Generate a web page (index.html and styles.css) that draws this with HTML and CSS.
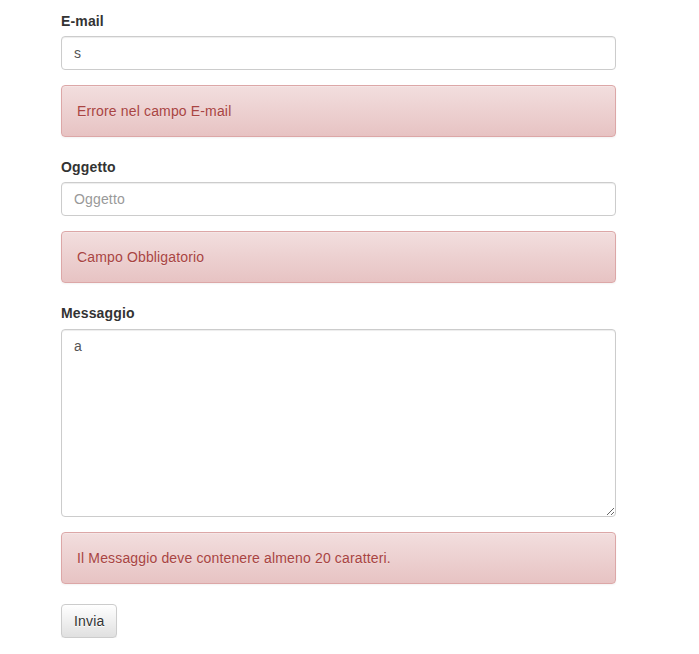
FILE: index.html
```html
<!DOCTYPE html>
<html lang="it">
<head>
<meta charset="utf-8">
<title>Contatti</title>
<link rel="stylesheet" href="styles.css">
</head>
<body>
<form class="form">
  <div class="form-group">
    <label class="label" for="email">E-mail</label>
    <input class="control" id="email" type="text" value="s">
  </div>
  <div class="alert">Errore nel campo E-mail</div>
  <div class="form-group">
    <label class="label" for="oggetto">Oggetto</label>
    <input class="control" id="oggetto" type="text" placeholder="Oggetto">
  </div>
  <div class="alert">Campo Obbligatorio</div>
  <div class="form-group">
    <label class="label" for="msg">Messaggio</label>
    <textarea class="control textarea" id="msg">a</textarea>
  </div>
  <div class="alert">Il Messaggio deve contenere almeno 20 caratteri.</div>
  <button class="btn" type="button">Invia</button>
</form>
</body>
</html>
```
FILE: styles.css
```css
* { box-sizing: border-box; }
html, body { margin: 0; padding: 0; background: #fff; }
body {
  font-family: "Liberation Sans", Arial, sans-serif;
  font-size: 14px;
  line-height: 20px;
  letter-spacing: 0.15px;
  color: #333;
}
.form {
  width: 555px;
  margin: 11px 0 0 61px;
}
.form-group { margin-bottom: 15px; }
.label {
  display: inline-block;
  font-weight: bold;
  margin-bottom: 5px;
}
.control {
  display: block;
  width: 100%;
  height: 34px;
  padding: 6px 12px;
  font-family: inherit;
  font-size: 14px;
  line-height: 20px;
  letter-spacing: inherit;
  color: #555;
  background: #fff;
  border: 1px solid #ccc;
  border-radius: 4px;
  box-shadow: inset 0 1px 1px rgba(0,0,0,.075);
  margin: 0;
}
.control::placeholder { color: #999; }
.textarea {
  height: 188px;
  margin-top: 1px;
  resize: vertical;
}
.alert {
  padding: 15px;
  margin-bottom: 20px;
  border: 1px solid #dca7a7;
  border-radius: 4px;
  color: #a94442;
  background: linear-gradient(to bottom, #f2dede 0, #e7c3c3 100%);
  box-shadow: inset 0 1px 0 rgba(255,255,255,.25), 0 1px 2px rgba(0,0,0,.05);
  text-shadow: 0 1px 0 rgba(255,255,255,.2);
}
.btn {
  display: inline-block;
  height: 34px;
  padding: 6px 12px;
  font-family: inherit;
  font-size: 14px;
  line-height: 20px;
  letter-spacing: inherit;
  color: #333;
  border: 1px solid #ccc;
  border-radius: 4px;
  background: linear-gradient(to bottom, #fff 0, #e0e0e0 100%);
  text-shadow: 0 1px 0 #fff;
  box-shadow: inset 0 1px 0 rgba(255,255,255,.15), 0 1px 1px rgba(0,0,0,.075);
  cursor: pointer;
}
```
